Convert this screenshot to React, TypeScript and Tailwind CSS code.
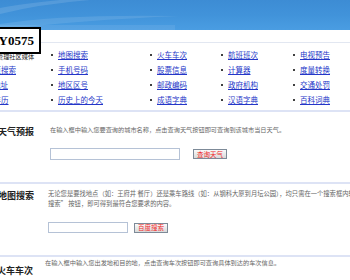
const linkCols = [
    { w: 'w-[99px]', items: ['地图搜索', '手机号码', '地区区号', '历史上的今天'] },
    { w: 'w-[71px]', items: ['火车车次', '股票信息', '邮政编码', '成语字典'] },
    { w: 'w-[72px]', items: ['航班班次', '计算器', '政府机构', '汉语字典'] },
    { w: 'flex-1', items: ['电视预告', '度量转换', '交通处罚', '百科词典'] },
]

function Divider() {
    return <div className="h-[2px] bg-[#dde3f5]" />
}

function QueryButton({ label }: { label: string }) {
    return (
        <button type="button"
            className="h-[10px] w-[34px] shrink-0 border border-[#7d8a98] bg-gradient-to-b from-[#fafafa] to-[#d9d9d9] text-[6.5px] leading-none text-[#f02828] flex items-center justify-center">
            {label}
        </button>
    )
}

function App() {
    return (
        <div className="relative w-[350px] h-[280px] overflow-hidden bg-white" style={{ fontFamily: '"Noto Sans CJK SC", "Noto Sans", sans-serif' }}>
            {/* header band */}
            <div className="relative h-[30px] bg-gradient-to-b from-[#3d8cd4] via-[#4193da] to-[#4a9de2] overflow-hidden">
                <svg className="absolute inset-0" width="350" height="30">
                    <path d="M0 14 Q40 4 90 0 L60 0 Q20 4 0 8 Z" fill="#ffffff" opacity="0.12" />
                    <path d="M0 24 Q60 14 180 16 Q80 20 0 30 Z" fill="#ffffff" opacity="0.1" />
                    <rect x="0" y="25" width="175" height="5" fill="#ffffff" opacity="0.08" />
                </svg>
            </div>
            <div className="h-[13px] border-b border-[#e2e7f1]" />

            {/* logo box */}
            <div className="absolute top-[27px] left-[-10px] w-[51px] h-[27px] border-2 border-black bg-white flex items-center justify-end pr-[5px]">
                <span className="text-[13px] font-bold leading-none text-black" style={{ fontFamily: '"Liberation Serif", serif' }}>Y0575</span>
            </div>

            {/* quick links */}
            <div className="flex pt-[4px] pb-[3px] text-[7.5px] leading-[15px]">
                <div className="w-[51px] shrink-0 flex flex-col">
                    <div className="h-[15px] flex items-end -ml-[3px] text-[6.2px] leading-[10px] text-[#222] whitespace-nowrap">管理社区媒体</div>
                    <a className="-ml-[14px] text-[#2436c8] underline whitespace-nowrap">网页搜索</a>
                    <a className="-ml-[14px] text-[#2436c8] underline whitespace-nowrap">IP地址</a>
                    <a className="-ml-[14px] text-[#2436c8] underline whitespace-nowrap">万年历</a>
                </div>
                {linkCols.map((col, i) => (
                    <div key={i} className={`${col.w} shrink-0 flex flex-col`}>
                        {col.items.map((item) => (
                            <div key={item} className="flex items-center whitespace-nowrap">
                                <span className="w-[2px] h-[2px] rounded-full bg-black" />
                                <a className="ml-[5px] text-[#2436c8] underline">{item}</a>
                            </div>
                        ))}
                    </div>
                ))}
            </div>

            <Divider />
            {/* 天气预报 */}
            <div className="flex h-[70px]">
                <div className="w-[50px] shrink-0 pt-[14px]">
                    <div className="-ml-[2px] text-[9px] leading-[12px] font-bold text-[#222] whitespace-nowrap">天气预报</div>
                </div>
                <div className="pt-[13px]">
                    <div className="text-[6.2px] leading-[10px] text-[#666] whitespace-nowrap">在输入框中输入您要查询的城市名称，点击查询天气按钮即可查询到该城市当日天气。</div>
                    <div className="mt-[13px] flex items-center gap-[13px]">
                        <input className="h-[12px] w-[130px] border border-[#b5c2d6] bg-white outline-none" type="text" />
                        <QueryButton label="查询天气" />
                    </div>
                </div>
            </div>

            <Divider />
            {/* 地图搜索 */}
            <div className="flex h-[71px]">
                <div className="w-[48px] shrink-0 pt-[6px]">
                    <div className="-ml-[2px] text-[9px] leading-[12px] font-bold text-[#222] whitespace-nowrap">地图搜索</div>
                </div>
                <div className="pt-[5px] text-[6.3px] leading-[10px] text-[#666] whitespace-nowrap">
                    <div>无论您是要找地点（如：王府井 餐厅）还是乘车路线（如：从钢科大厦到月坛公园），均只需在一个搜索框内输入，并点击“百度</div>
                    <div>搜索” 按钮，即可得到最符合您要求的内容。</div>
                    <div className="mt-[13px] flex items-center gap-[6px]">
                        <input className="h-[11px] w-[80px] border border-[#b5c2d6] bg-white outline-none" type="text" />
                        <QueryButton label="百度搜索" />
                    </div>
                </div>
            </div>

            <Divider />
            {/* 火车车次 */}
            <div className="flex">
                <div className="w-[45px] shrink-0 pt-[8px]">
                    <div className="-ml-[3px] text-[9px] leading-[12px] font-bold text-[#222] whitespace-nowrap">火车车次</div>
                </div>
                <div className="pt-[1px] text-[6.2px] leading-[10px] text-[#666] whitespace-nowrap">在输入框中输入您出发地和目的地，点击查询车次按钮即可查询具体到达的车次信息。</div>
            </div>
        </div>
    )
}

export default App
